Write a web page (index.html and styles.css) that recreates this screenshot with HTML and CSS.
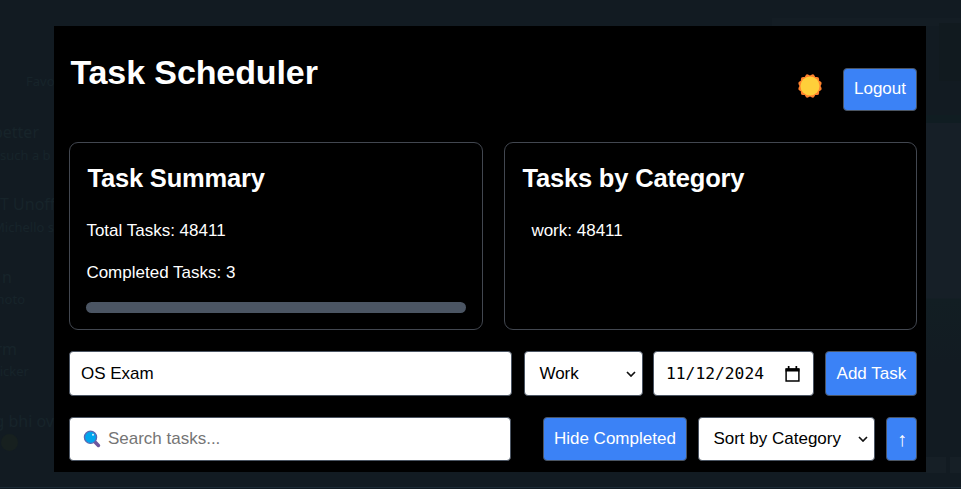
FILE: index.html
```html
<!DOCTYPE html>
<html lang="en">
<head>
<meta charset="utf-8">
<title>Task Scheduler</title>
<link rel="stylesheet" href="styles.css">
</head>
<body>
<div class="backdrop" aria-hidden="true">
  <span class="ghost-top"></span>
  <span class="ghost-image"></span>
  <span class="ghost-band"></span>
  <span class="ghost-panel"></span>
  <span class="ghost-box"></span>
  <span class="ghost-line"></span>
  <span class="ghost g1">Favo</span>
  <span class="ghost big g2">better</span>
  <span class="ghost g3">such a b</span>
  <span class="ghost big g4">T Unoff</span>
  <span class="ghost g5">Michello s</span>
  <span class="ghost big g6">n</span>
  <span class="ghost g7">photo</span>
  <span class="ghost big g8">rm</span>
  <span class="ghost g9">icker</span>
  <span class="ghost big g10">g bhi ov</span>
  <span class="ghost-dot"></span>
</div>
<main class="app">
  <header class="header">
    <h1>Task Scheduler</h1>
    <div class="actions">
      <svg class="sun" viewBox="0 0 24 24"><g fill="#ff822d"><rect x="3.6" y="3.6" width="16.8" height="16.8" rx="2"/><rect x="3.6" y="3.6" width="16.8" height="16.8" rx="2" transform="rotate(30 12 12)"/><rect x="3.6" y="3.6" width="16.8" height="16.8" rx="2" transform="rotate(60 12 12)"/></g><circle cx="12" cy="12" r="8.8" fill="#ffcf3a"/></svg>
      <button class="btn logout">Logout</button>
    </div>
  </header>
  <section class="cards">
    <article class="card">
      <h2>Task Summary</h2>
      <p>Total Tasks: 48411</p>
      <p class="completed">Completed Tasks: 3</p>
      <div class="progress"></div>
    </article>
    <article class="card">
      <h2>Tasks by Category</h2>
      <p class="category">work: 48411</p>
    </article>
  </section>
  <div class="row add-row">
    <div class="field title">OS Exam</div>
    <div class="field select kind"><span>Work</span><svg class="chevron" viewBox="0 0 10 6"><path d="M1 1l4 4 4-4"/></svg></div>
    <div class="field date"><span>11/12/2024</span><svg class="calendar" viewBox="0 0 14 15"><path d="M1 3h12v11H1z" fill="none" stroke="#000" stroke-width="1.4"/><path d="M.5 2h13v3.2H.5zM2.6 0h1.6v3H2.6zM9.8 0h1.6v3H9.8z"/></svg></div>
    <button class="btn add">Add Task</button>
  </div>
  <div class="row filter-row">
    <div class="field search"><svg class="lens" viewBox="0 0 18 18"><path d="M12 12l3.4 3.4" stroke="#6d559c" stroke-width="3.6" stroke-linecap="round"/><circle cx="7.5" cy="7.3" r="6.1" fill="#00a6ed" stroke="#5968b2" stroke-width="1.3"/><circle cx="10" cy="4.7" r="1" fill="#d9f4ff"/></svg><span>Search tasks...</span></div>
    <button class="btn hide">Hide Completed</button>
    <div class="field select sort"><span>Sort by Category</span><svg class="chevron" viewBox="0 0 10 6"><path d="M1 1l4 4 4-4"/></svg></div>
    <button class="btn order">↑</button>
  </div>
</main>
</body>
</html>
```
FILE: styles.css
```css
* { box-sizing: border-box; }
body {
  margin: 0;
  height: 489px;
  padding: 26px 35px 17px 54px;
  overflow: hidden;
  position: relative;
  background: #121b22;
  color: #fff;
  font: 17px/20px "Liberation Sans", Arial, sans-serif;
}
.backdrop { position: absolute; inset: 0; z-index: 0; }
.backdrop span { position: absolute; white-space: nowrap; }
.ghost { color: #17242a; font: 13px/16px "Noto Sans", sans-serif; }
.ghost.big { font-size: 16px; }
.g1 { left: 26px; top: 73px; }
.g2 { right: 922px; top: 124px; }
.g3 { left: 0; top: 147px; }
.g4 { left: 0; top: 196px; }
.g5 { right: 907px; top: 219px; }
.g6 { left: 2px; top: 269px; }
.g7 { right: 936px; top: 291px; }
.g8 { right: 944px; top: 341px; }
.g9 { right: 932px; top: 363px; }
.g10 { right: 907px; top: 413px; }
.ghost-dot { left: 1px; top: 434px; width: 17px; height: 17px; border-radius: 50%; background: #17201f; }
.ghost-top { left: 772px; top: 18px; right: 0; height: 8px; background: #141d24; }
.ghost-image { left: 939px; top: 23px; right: 0; height: 58px; background: #111a1f; }
.ghost-band { left: 926px; top: 115px; right: 0; height: 8px; background: #101d22; }
.ghost-panel { left: 926px; top: 123px; right: 0; height: 240px; background: linear-gradient(#161f27 0 175px, #121e23 176px, #121b22); }
.ghost-box { left: 926px; top: 457px; width: 20px; height: 16px; background: #161f26; box-shadow: 24px 0 #161f26; }
.ghost-line { left: 0; right: 0; top: 487px; height: 1px; background: #1c2b36; }

.app {
  position: relative;
  height: 446px;
  padding: 0 9px 0 15.4px;
  background: #000;
}
.header { display: flex; justify-content: space-between; height: 116px; }
h1 { margin: 26px 0 0 1px; font-size: 34px; line-height: 40px; letter-spacing: -.1px; white-space: nowrap; }
.actions { display: flex; align-items: flex-start; padding-top: 42px; }
.sun { width: 26px; height: 26px; margin: 5px 20px 0 0; }
.btn {
  flex: none;
  margin: 0;
  padding: 0;
  border: 1px solid #4b5563;
  border-radius: 4px;
  background: #3b82f6;
  color: #fff;
  font: inherit;
  white-space: nowrap;
}
.logout { width: 74px; height: 43px; padding-bottom: 1px; }
.cards { display: grid; grid-template-columns: 414px 413px; gap: 21px; width: 848px; height: 188px; }
.card { padding: 20px 16px 0; border: 1px solid #424750; border-radius: 9px; }
h2 { margin: 0 0 28px 1px; font-size: 25.5px; line-height: 30px; letter-spacing: -.17px; white-space: nowrap; }
.card p { margin: 0 0 22px; }
.card .completed { margin-bottom: 19px; }
.card .category { margin-left: 10px; }
.progress { height: 11px; border-radius: 6px; background: #4b5563; }
.row { display: flex; }
.add-row { margin-top: 21px; height: 45px; }
.filter-row { margin-top: 21px; height: 44px; }
.field {
  display: flex;
  align-items: center;
  flex: none;
  border: 1px solid #4b5563;
  border-radius: 4px;
  background: #fff;
  color: #000;
  white-space: nowrap;
}
.title { width: 443px; padding-left: 10.6px; }
.kind { width: 119px; margin-left: 12px; }
.select { justify-content: space-between; padding: 0 6px 0 14px; }
.chevron { width: 10px; height: 6px; fill: none; stroke: #111; stroke-width: 1.7; }
.date { width: 161px; margin-left: 10px; padding: 0 13.5px 0 11.6px; justify-content: space-between; font: 16.3px/20px "DejaVu Sans Mono", monospace; }
.calendar { width: 15px; height: 16px; }
.add { width: 92px; margin-left: 11px; }
.search { width: 442px; padding-left: 12.5px; gap: 7px; color: #757575; }
.lens { width: 18px; height: 18px; }
.hide { width: 144px; margin-left: 31.5px; }
.sort { width: 177px; margin-left: 11.5px; }
.order { width: 31px; margin-left: 11px; font-size: 20px; }
```
